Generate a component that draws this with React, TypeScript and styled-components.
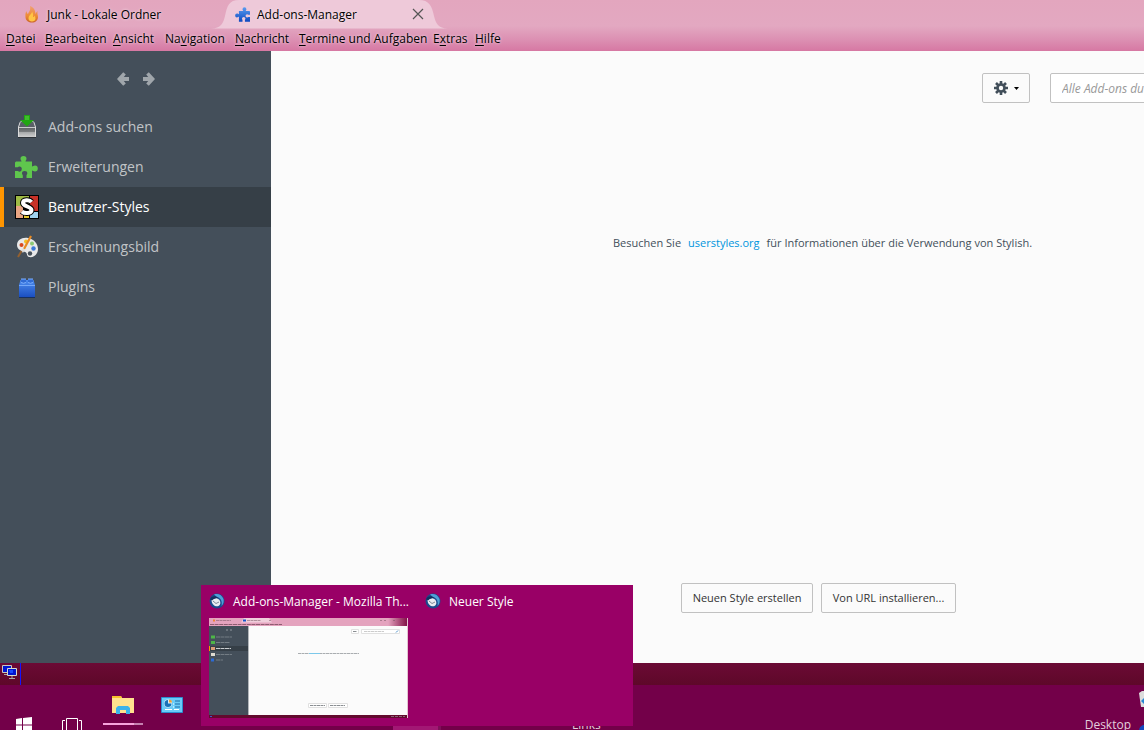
import React from "react";
import styled, { createGlobalStyle, css } from "styled-components";

const Global = createGlobalStyle`
  * { box-sizing: border-box; }
  html, body { margin: 0; height: 100%; overflow: hidden; }
  body, button, input { font-family: "Open Sans", "Noto Sans", sans-serif; font-size: 12px; }
  #root { height: 100%; }
`;

const Desktop = styled.div`
  position: relative;
  display: flex;
  flex-direction: column;
  height: 100vh;
  overflow: hidden;
  background: #730049;
`;

const Header = styled.header`
  flex: none;
  background: linear-gradient(#e3a6be 0px, #e3a8c1 26px, #dc8fb2 40px, #d678a3 51px);
  color: #000;
  text-shadow: 0 0 3px rgba(255, 255, 255, 0.8);
`;

const TabStrip = styled.div`
  display: flex;
  height: 29px;
`;

const Tab = styled.button<{ $active?: boolean }>`
  position: relative;
  display: flex;
  align-items: center;
  gap: 7px;
  flex: none;
  width: ${(p) => (p.$active ? 204 : 200)}px;
  height: 28px;
  margin-left: 24px;
  padding: 0;
  border: 0;
  background: none;
  color: #000;
  text-shadow: inherit;
  text-align: left;
  ${(p) =>
    p.$active &&
    css`
      margin-left: 2px;
      padding: 0 6px 0 9px;
    `}
`;

const TabShape = styled.svg`
  position: absolute;
  top: 0;
  left: -15px;
`;

const TabLabel = styled.span`
  position: relative;
  flex: 1;
  white-space: nowrap;
`;

const TabIcon = styled.svg`
  position: relative;
  flex: none;
`;

const Menu = styled.nav`
  display: flex;
  gap: 12px;
  height: 22px;
  padding-left: 6px;
`;

const MenuItem = styled.button<{ $width: number }>`
  flex: none;
  width: ${(p) => p.$width}px;
  padding: 0 0 2px;
  border: 0;
  background: none;
  color: #000;
  text-align: left;
  text-shadow: inherit;
  white-space: nowrap;
  line-height: 18px;
  u { text-underline-offset: 2px; }
`;

const Main = styled.main`
  display: flex;
  flex: 1;
  min-height: 0;
`;

const Sidebar = styled.aside`
  flex: none;
  width: 271px;
  background: #444f5a;
`;

const Arrows = styled.div`
  display: flex;
  justify-content: center;
  gap: 14px;
  padding: 21px 0 22px;
`;

const IconButton = styled.button`
  display: block;
  height: 13px;
  padding: 0;
  border: 0;
  background: none;
  svg { display: block; }
`;

const Category = styled.button<{ $selected?: boolean }>`
  display: flex;
  align-items: center;
  gap: 9px;
  width: 100%;
  height: 40px;
  padding: 0 0 0 11px;
  border: 0;
  border-left: 4px solid ${(p) => (p.$selected ? "#ff9500" : "transparent")};
  background: ${(p) => (p.$selected ? "#363f47" : "transparent")};
  color: ${(p) => (p.$selected ? "#fff" : "#c1c4c7")};
  font-size: 14px;
  svg { flex: none; }
  span { padding-bottom: 2px; }
`;

const Content = styled.section`
  display: flex;
  flex-direction: column;
  flex: 1;
  min-width: 0;
  background: #fbfbfb;
  color: #424f5a;
`;

const Toolbar = styled.div`
  display: flex;
  justify-content: flex-end;
  gap: 20px;
  padding-top: 22px;
  overflow: hidden;
`;

const Button = styled.button<{ $width: number }>`
  display: flex;
  align-items: center;
  justify-content: center;
  gap: 6px;
  flex: none;
  width: ${(p) => p.$width}px;
  height: 30px;
  padding: 0;
  border: 1px solid #c1c1c1;
  border-radius: 2px;
  background: #fbfbfb;
  color: #333;
  font-size: 11px;
  white-space: nowrap;
  span { padding-bottom: 2px; }
`;

const Search = styled.input`
  width: 220px;
  height: 30px;
  margin-right: -126px;
  padding: 0 11px;
  border: 1px solid #c1c1c1;
  border-radius: 2px;
  background: #fff;
  font-style: italic;
  &::placeholder { color: #999; opacity: 1; }
`;

const Notice = styled.p`
  display: flex;
  gap: 7px;
  margin: 131px 0 auto 342px;
  font-size: 11px;
  line-height: 18px;
  white-space: nowrap;
`;

const Link = styled.a`
  color: #0095dd;
  text-decoration: none;
`;

const Actions = styled.div`
  display: flex;
  gap: 8px;
  padding: 0 0 50px 410px;
`;

const StatusBar = styled.footer`
  display: flex;
  flex: none;
  height: 22px;
  background: linear-gradient(#6b0a35, #5e0829);
`;

const StatusIcon = styled.div`
  width: 21px;
  padding: 2px 0 0 2px;
  border-right: 1px solid #1414ff;
`;

const Taskbar = styled.div`
  display: flex;
  align-items: flex-start;
  flex: none;
  height: 45px;
  overflow: hidden;
  color: #e3cfdc;
`;

const TaskButton = styled.button<{ $width: number; $top: number; $running?: boolean }>`
  display: flex;
  justify-content: center;
  flex: none;
  width: ${(p) => p.$width}px;
  height: 40px;
  padding: ${(p) => p.$top}px 0 0;
  border: 0;
  background: none;
  overflow: visible;
  ${(p) =>
    p.$running &&
    css`
      background: linear-gradient(90deg, #f7a3dc 31px, #c580b0 31px) bottom / 100% 2px no-repeat;
    `}
`;

const TaskGroup = styled.div`
  display: flex;
  align-items: flex-start;
  height: 40px;
  margin-right: 7px;
`;

const OpenWindow = styled.div`
  align-self: flex-end;
  width: 48px;
  height: 4px;
  margin-left: 186px;
  border-right: 3px solid #7e1059;
  background: #a21874;
`;

const ToolbarLabel = styled.span<{ $push?: boolean }>`
  margin-left: ${(p) => (p.$push ? "auto" : "131px")};
  padding-top: 31px;
  line-height: 17px;
`;

const TrayStack = styled.div`
  width: 5px;
  margin-left: 8px;
  padding-top: 6px;
  overflow: hidden;
`;

const Peek = styled.div`
  position: absolute;
  left: 201px;
  bottom: 4px;
  display: flex;
  gap: 16px;
  width: 432px;
  height: 141px;
  padding: 8px;
  background: #990066;
  color: #fff;
`;

const PeekWindow = styled.div`
  display: flex;
  flex-direction: column;
  gap: 9px;
  width: 200px;
`;

const PeekTitle = styled.div`
  display: flex;
  align-items: center;
  gap: 8px;
  height: 16px;
  white-space: nowrap;
`;

const PUZZLE =
  "M1 5.500H6.500C6.500 4.500 5.500 4 5.500 2.800A3 2.800 0 0 1 11.500 2.800C11.500 4 10.500 4.500 10.500 5.500H17V10.500C18 10.500 18.500 9.500 20 9.500A2.800 3 0 0 1 20 15.500C18.500 15.500 18 14.500 17 14.500V22H11.500V19.500C11.500 19 12.300 18.500 12.300 17.300A2.600 2.300 0 0 0 7 17.300C7 18.500 7.800 19 7.800 19.500V22H0V15H2.500C3 15 3.500 15.700 4.500 15.700A2.300 2.600 0 0 0 4.500 10.500C3.500 10.500 3 11.300 2.500 11.300H0V6.500z";

const Flame = () => (
  <TabIcon width="16" height="17" viewBox="0 0 16 17">
    <defs>
      <linearGradient id="flame" x2="0" y2="1">
        <stop stopColor="#efa070" />
        <stop offset="0.6" stopColor="#ee8a35" />
        <stop offset="1" stopColor="#c9652a" />
      </linearGradient>
    </defs>
    <path d="M6 0C7 4 5 5.500 4 8 3 7.500 2.500 6 2.500 5 1 7.500 1.500 9 1.500 11.500 2 15 4.500 16.500 8 16.500s6-2 6-5.500c0-2-1-3.500-.5-6C12.500 6 12 7 11.500 8 11.500 4.500 9.500 1 6 0z" fill="url(#flame)" />
    <path d="M8 5.500C8 8.500 4.500 9 4.500 12.500c0 2 1.500 3 3.500 3s3.500-1 3.500-3c0-1-.5-2-.5-3-1 1-1.500 1.500-2 1.500C9.500 9 9 7 8 5.500z" fill="#ffc545" />
  </TabIcon>
);

const BluePuzzle = () => (
  <TabIcon width="15" height="15" viewBox="0 0 23 22">
    <defs>
      <linearGradient id="bp" x2="0" y2="1">
        <stop stopColor="#5b9cf0" />
        <stop offset="1" stopColor="#0d49c0" />
      </linearGradient>
    </defs>
    <g transform="matrix(-1 0 0 1 23 0)">
      <path d={PUZZLE} fill="url(#bp)" />
    </g>
  </TabIcon>
);

const GreenPuzzle = () => (
  <svg width="24" height="24" viewBox="0 -1 24 24">
    <path d={PUZZLE} fill="#5fc64d" />
  </svg>
);

const Arrow = ({ flip }: { flip?: boolean }) => (
  <svg width="12" height="14" viewBox="0 0 12 14">
    <path
      transform={flip ? "matrix(-1 0 0 1 12 0)" : undefined}
      d="M0 7 6.200 0.300 8.800 2.500 6.800 5H12V9H6.800L8.800 11.500 6.200 13.700z"
      fill="#a0a6ab"
    />
  </svg>
);

const Download = () => (
  <svg width="24" height="24" viewBox="0 0 24 24">
    <defs>
      <linearGradient id="dl" x2="0" y2="1">
        <stop stopColor="#5d6163" />
        <stop offset="0.48" stopColor="#7c7f80" />
        <stop offset="0.52" stopColor="#a9abac" />
        <stop offset="1" stopColor="#cfcfcf" />
      </linearGradient>
    </defs>
    <path d="M3.500 22V12l1.500-4.500q.4-1 1.500-1h11q1.100 0 1.500 1l1.500 4.500v10z" fill="#596067" stroke="#dcdcdc" />
    <path d="M4 12.500h16V22H4z" fill="url(#dl)" />
    <path d="M4 12.500h16" stroke="#c9cbcc" />
    <path d="M3 22.500h18" stroke="#2e3338" />
    <path d="M9 0h6v5h4l-7 6.500L5 5h4z" fill="#22a613" />
    <path d="M10 1h4v4h-4z" fill="#3fbe2b" />
  </svg>
);

const Stylish = () => (
  <svg width="24" height="24" viewBox="0 0 24 24">
    <path d="M0 0h24v24H0z" fill="#000" />
    <path d="M1 1h13v10H1z" fill="#9fba45" />
    <path d="M15 1h8v15h-8z" fill="#c83228" />
    <path d="M1 11h7v12H1z" fill="#e8a583" />
    <path d="M9 17h5v6H9z" fill="#e8c931" />
    <path d="M15 17h8v6h-8z" fill="#a0d2ee" />
    <path d="M16.500 7C14.500 4.500 8 4.500 8 8S16.500 11.500 16.500 15 9.500 19 7 16.500" fill="none" stroke="#000" strokeWidth="6" />
    <path d="M16.500 7C14.500 4.500 8 4.500 8 8S16.500 11.500 16.500 15 9.500 19 7 16.500" fill="none" stroke="#fff" strokeWidth="4" />
  </svg>
);

const Palette = () => (
  <svg width="24" height="24" viewBox="0 0 24 24">
    <path d="M2 10C2 5 7 2 13 3s10 6 10 11-4 9-9 8c-3-1-1-4-4-5s-8-2-8-7z" fill="#e9e9e9" />
    <circle cx="6.500" cy="10" r="2" fill="#d9481f" />
    <circle cx="11" cy="6.500" r="2" fill="#f5c021" />
    <circle cx="17" cy="8.500" r="2" fill="#8cc975" />
    <circle cx="18.500" cy="13.500" r="2.200" fill="#3c79d8" />
    <circle cx="15" cy="18.500" r="2.200" fill="#46505a" />
    <path d="M16 1 9 14" stroke="#e98b23" strokeWidth="2.200" />
    <path d="M9 14 7 17" stroke="#ddd" strokeWidth="2.500" />
    <path d="M6.500 16 3 22" stroke="#94602f" strokeWidth="2" />
  </svg>
);

const Brick = () => (
  <svg width="24" height="24" viewBox="0 0 24 24">
    <defs>
      <linearGradient id="br" x2="0" y2="1">
        <stop stopColor="#4d8df0" />
        <stop offset="1" stopColor="#1b4fc0" />
      </linearGradient>
    </defs>
    <path d="M4 10 5.500 5h13L20 10v12H4z" fill="url(#br)" />
    <path d="M4 22.500h16" stroke="#16305f" />
    <path d="M6 4h5v4H6zM13 4h5v4h-5z" fill="#2f6ad4" />
    <path d="M6 4h5M13 4h5M6 7.500q2.500 1.500 5 0M13 7.500q2.500 1.500 5 0" fill="none" stroke="#7eb0fb" />
    <path d="M4 10.500h16" stroke="#74a7f7" />
  </svg>
);

const Gear = () => (
  <svg width="14" height="14" viewBox="0 0 14 14">
    <g stroke="#424f5a" strokeWidth="2.600">
      <path d="M7 0v14M0 7h14M2 2l10 10M12 2 2 12" />
    </g>
    <circle cx="7" cy="7" r="4.800" fill="#424f5a" />
    <circle cx="7" cy="7" r="2.200" fill="#fbfbfb" />
  </svg>
);

const Thunderbird = () => (
  <svg width="16" height="16" viewBox="0 0 16 16">
    <circle cx="8" cy="8" r="7.500" fill="#1b4a8c" />
    <path d="M5 1.500C9 0 13 2 14.500 6c.6 2.500 0 5-2 7C13.500 8.500 12 5 8 4z" fill="#4f9fd8" />
    <path d="M2.500 7.500C4 5 8 4.500 10.500 7c1.500 2 1 5-1 6-3 1-6.500-1-7-5.500z" fill="#e9edf1" />
    <path d="M4 8l3 2.500L10 9" fill="none" stroke="#7d8896" />
    <path d="M1 6.500C2 3.500 6 2 9.500 5 7 5 5 5.500 3 7.500z" fill="#122f60" />
  </svg>
);

const Preview = () => (
  <svg width="199" height="100" viewBox="0 0 199 100" role="img" aria-label="Add-ons-Manager">
    <defs>
      <linearGradient id="ph">
        <stop offset="0.900" stopColor="#e4a3be" />
        <stop offset="1" stopColor="#7d0b42" />
      </linearGradient>
    </defs>
    <path d="M0 0h199v100H0z" fill="#fbfbfb" />
    <path d="M0 0h199v8H0z" fill="url(#ph)" />
    <path d="M32 4.500L35 0h25l3 4.500z" fill="#f0cedb" />
    <path d="M4 2.500h2" stroke="#ef8332" strokeWidth="2" />
    <path d="M34 2.500h3" stroke="#1555cc" strokeWidth="2" />
    <path d="M7 2.500h15M38 2.500h14M60 2.500h2M171 2.500h2M175 2.500h2M184 2.500h2" stroke="#74535f" strokeDasharray="3 .5" opacity="0.5" />
    <path d="M1 6.500h72" stroke="#572d3e" strokeDasharray="4 .6" opacity="0.6" />
    <path d="M0 8h39v89H0z" fill="#444f5a" />
    <path d="M39 8h1v89h-1z" fill="#b3b7bb" />
    <path d="M0 28h39v5H0z" fill="#363f47" />
    <path d="M0 28h1v5H0z" fill="#ff9500" />
    <path d="M17 12h2M21 12h2" stroke="#8f979d" />
    <path d="M7 19h16M7 24.500h14M7 36.500h16M7 42h7" stroke="#7f888f" strokeDasharray="4 .5" opacity="0.8" />
    <path d="M7 30.500h15" stroke="#c9cdd0" strokeDasharray="4 .5" />
    <path d="M2 19h4M2 24.500h4" stroke="#4eb548" strokeWidth="3" />
    <path d="M2 30.500h4" stroke="#d99c78" strokeWidth="3" />
    <path d="M2 36.500h4" stroke="#dedbd2" strokeWidth="3" />
    <path d="M2 42h3" stroke="#2c6bd6" strokeWidth="3" />
    <path d="M142.500 11.500h7v4h-7zM152.500 11.500h38v4h-38zM99.500 85.500h18v4h-18zM119.500 85.500h19v4h-19z" fill="#fff" stroke="#e0e0e0" />
    <path d="M144 13.500h4M101 87.500h15M121 87.500h15" stroke="#8a8e92" strokeDasharray="3 .5" />
    <path d="M155 13.500h20" stroke="#ccc" strokeDasharray="3 .5" />
    <path d="M89 35.500h61" stroke="#a9adb0" strokeDasharray="3 .5" />
    <path d="M100 35.500h11" stroke="#7cc8ea" />
    <path d="M187 14.500l2-2" stroke="#4a90c8" />
    <path d="M0 97h199v3H0z" fill="#620a2e" />
    <path d="M1 98.500h2" stroke="#3b5bd0" />
    <path d="M182 98.500h14" stroke="#8b5f76" strokeDasharray="3 1" />
    <path d="M198.500 0v100" stroke="#e3c4d1" />
  </svg>
);

const Monitors = () => (
  <svg width="16" height="15" viewBox="0 0 16 15">
    <path d="M0.500 0.500h9v7h-9z" fill="#0014d0" stroke="#c9c9bd" />
    <path d="M2 9.500h5" stroke="#aaa" />
    <path d="M5.500 3.500h9v7h-9z" fill="#0014d0" stroke="#d9d9cd" />
    <path d="M7 5h4v3H8z" fill="#1848ff" />
    <path d="M10 11v2M7 13.500h6" stroke="#aaa" />
  </svg>
);

const Windows = () => (
  <svg width="16" height="16" viewBox="0 0 16 16">
    <path d="M0 2l6-1v6.500H0zM7 1l9-1v7.500H7zM0 8.500h6V15l-6-1zM7 8.500h9V16l-9-1z" fill="#fff" />
  </svg>
);

const TaskView = () => (
  <svg width="20" height="16" viewBox="0 0 20 16" fill="none" stroke="#fff">
    <path d="M4.500 0.500h11v15h-11zM3 2.500H0.500v11H3M17 2.500h2.500v11H17" />
  </svg>
);

const Folder = () => (
  <svg width="22" height="19" viewBox="0 0 22 19">
    <path d="M0 0h9l1 2h12v15H0z" fill="#ffe28e" />
    <path d="M0 0h9l1 2H0z" fill="#f6c22d" />
    <path d="M4 18v-6l2-2h10l2 2v6h-4v-4H8v4z" fill="#3bb3ea" />
  </svg>
);

const ControlPanel = () => (
  <svg width="22" height="16" viewBox="0 0 22 16">
    <path d="M0.500 0.500h21v15h-21z" fill="#6accf8" stroke="#2a8fd0" />
    <circle cx="7" cy="6.500" r="4" fill="#d9f0fb" />
    <path d="M7 6.500V3a3.500 3.500 0 1 0 3.500 3.500z" fill="#1872b8" />
    <path d="M8 5.500V2.500a3 3 0 0 1 3 3z" fill="#f2a23a" />
    <path d="M14 4h5M14 7h5M14 10h5" stroke="#1c6da8" />
    <path d="M12 7h1M12 10h1" stroke="#fff" />
    <path d="M4 12.500h7M13 12.500h5" stroke="#fff" />
  </svg>
);

const RecycleBin = () => (
  <svg width="5" height="40" viewBox="0 0 5 40">
    <path d="M0 2 3 0h2v16H2z" fill="#dcdcdc" />
    <path d="M2 10l3-3v6z" fill="#2387d4" />
    <path d="M0 40c0-3 2-6 5-6v6z" fill="#1549bf" />
  </svg>
);

const menuItems: [string, string, string, number][] = [
  ["", "D", "atei", 27],
  ["", "B", "earbeiten", 56],
  ["", "A", "nsicht", 40],
  ["Na", "v", "igation", 58],
  ["", "N", "achricht", 52],
  ["", "T", "ermine und Aufgaben", 122],
  ["E", "x", "tras", 30],
  ["", "H", "ilfe", 26],
];

const categories = [
  { label: "Add-ons suchen", icon: <Download /> },
  { label: "Erweiterungen", icon: <GreenPuzzle /> },
  { label: "Benutzer-Styles", icon: <Stylish />, selected: true },
  { label: "Erscheinungsbild", icon: <Palette /> },
  { label: "Plugins", icon: <Brick /> },
];

export default function App() {
  return (
    <Desktop>
      <Global />
      <Header>
        <TabStrip>
          <Tab>
            <Flame />
            <TabLabel>Junk - Lokale Ordner</TabLabel>
          </Tab>
          <Tab $active>
            <TabShape width="240" height="29" viewBox="0 0 240 29">
              <path d="M0 28.500C10 28 12 24 14 16 16 6 18 0 28 0H208c10 0 13 6 15 16 2 8 4 12 14 12.500z" fill="#eec9d9" />
            </TabShape>
            <BluePuzzle />
            <TabLabel>Add-ons-Manager</TabLabel>
            <TabIcon width="12" height="12" viewBox="0 0 12 12">
              <path d="M1 1l10 10M11 1 1 11" stroke="#555" strokeWidth="1.200" />
            </TabIcon>
          </Tab>
        </TabStrip>
        <Menu>
          {menuItems.map(([before, key, after, width]) => (
            <MenuItem key={after} $width={width}>
              {before}
              <u>{key}</u>
              {after}
            </MenuItem>
          ))}
        </Menu>
      </Header>
      <Main>
        <Sidebar>
          <Arrows>
            <IconButton aria-label="Zurück"><Arrow /></IconButton>
            <IconButton aria-label="Vor"><Arrow flip /></IconButton>
          </Arrows>
          {categories.map((c) => (
            <Category key={c.label} $selected={c.selected}>
              {c.icon}
              <span>{c.label}</span>
            </Category>
          ))}
        </Sidebar>
        <Content>
          <Toolbar>
            <Button $width={48} aria-label="Werkzeuge">
              <Gear />
              <svg width="5" height="3" viewBox="0 0 5 3"><path d="M0 0h5L2.500 3z" fill="#000" /></svg>
            </Button>
            <Search type="search" placeholder="Alle Add-ons durchsuchen" aria-label="Alle Add-ons durchsuchen" />
          </Toolbar>
          <Notice>
            <span>Besuchen Sie</span>
            <Link href="#userstyles">userstyles.org</Link>
            <span>für Informationen über die Verwendung von Stylish.</span>
          </Notice>
          <Actions>
            <Button $width={132}><span>Neuen Style erstellen</span></Button>
            <Button $width={135}><span>Von URL installieren...</span></Button>
          </Actions>
        </Content>
      </Main>
      <StatusBar>
        <StatusIcon><Monitors /></StatusIcon>
      </StatusBar>
      <Taskbar>
        <TaskGroup>
          <TaskButton $width={48} $top={32} aria-label="Start"><Windows /></TaskButton>
          <TaskButton $width={48} $top={33} aria-label="Taskansicht"><TaskView /></TaskButton>
        </TaskGroup>
        <TaskGroup>
          <TaskButton $width={40} $top={11} $running aria-label="Explorer"><Folder /></TaskButton>
          <TaskButton $width={57} $top={12} aria-label="Systemsteuerung"><ControlPanel /></TaskButton>
        </TaskGroup>
        <OpenWindow />
        <ToolbarLabel>Links</ToolbarLabel>
        <ToolbarLabel $push>Desktop</ToolbarLabel>
        <TrayStack><RecycleBin /></TrayStack>
      </Taskbar>
      <Peek>
        <PeekWindow>
          <PeekTitle><Thunderbird /><span>Add-ons-Manager - Mozilla Th...</span></PeekTitle>
          <Preview />
        </PeekWindow>
        <PeekWindow>
          <PeekTitle><Thunderbird /><span>Neuer Style</span></PeekTitle>
        </PeekWindow>
      </Peek>
    </Desktop>
  );
}
